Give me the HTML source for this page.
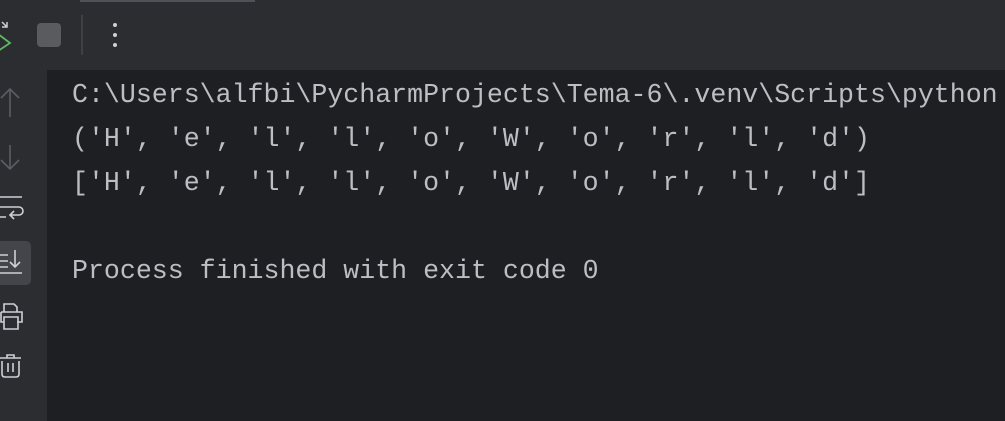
<!DOCTYPE html>
<html><head><style>
body{margin:0;width:1005px;height:421px;background:#1e1f22;overflow:hidden;position:relative;font-family:"Liberation Mono",monospace}
.top{position:absolute;left:0;top:0;width:1005px;height:70px;background:#2b2d30}
.left{position:absolute;left:0;top:70px;width:47px;height:351px;background:#2b2d30}
.txt{position:absolute;left:72px;top:73px;color:#bcbec4;font-size:26.6px;line-height:44px;white-space:pre}
svg{position:absolute}
</style></head><body>
<div class="top"></div>
<div style="position:absolute;left:80px;top:0;width:175px;height:2px;background:#4e5157"></div>
<svg style="left:0;top:18px" width="14" height="36"><path d="M2 4 L7 9 M7 4 V9 H2" stroke="#ced0d6" stroke-width="1.5" fill="none"/><path d="M-2 16 L10 25 L-2 33" stroke="#5fb865" stroke-width="1.8" fill="none"/></svg>
<div style="position:absolute;left:37px;top:23px;width:24px;height:24px;border-radius:4px;background:#5a5b5e"></div>
<div style="position:absolute;left:81px;top:15px;width:2px;height:40px;background:#3e4044"></div>
<svg style="left:110px;top:20px" width="10" height="30"><circle cx="5" cy="5" r="2" fill="#ced0d6"/><circle cx="5" cy="15" r="2" fill="#ced0d6"/><circle cx="5" cy="25" r="2" fill="#ced0d6"/></svg>
<div class="left"></div>
<div style="position:absolute;left:0;top:241px;width:31px;height:44px;border-radius:0 5px 5px 0;background:#43454a"></div>
<svg style="left:0;top:85px" width="30" height="300" fill="none" stroke-width="1.6">
<path d="M10 4 V32 M1 13 L10 4 L19 13" stroke="#5a5d63"/>
<path d="M10 60 V84 M1 75 L10 84 L19 75" stroke="#5a5d63"/>
<path d="M0 112 H22 M0 122 H19 A4 4 0 0 1 19 130 H11 M14 126 L10 130 L14 134 M0 132 H6" stroke="#ced0d6"/>
<path d="M0 170 H8 M0 176 H8 M0 182 H8 M15 165 V182 M10 177 L15 182 L20 177 M0 188 H22" stroke="#ced0d6"/>
<path d="M4 227 V219 H14 L17 222 V227 M1 227 H22 V237 H17 M4 237 H1 V227 M4 232 H18 V244 H4 Z" stroke="#ced0d6"/>
<path d="M0 273 H21 M7 273 V270 H14 V273 M2 276 V289 Q2 292 5 292 H16 Q19 292 19 289 V276 M8 278 V287 M13 278 V287" stroke="#ced0d6"/>
</svg>
<div class="txt">C:\Users\alfbi\PycharmProjects\Tema-6\.venv\Scripts\python
('H', 'e', 'l', 'l', 'o', 'W', 'o', 'r', 'l', 'd')
['H', 'e', 'l', 'l', 'o', 'W', 'o', 'r', 'l', 'd']

Process finished with exit code 0</div>
</body></html>
